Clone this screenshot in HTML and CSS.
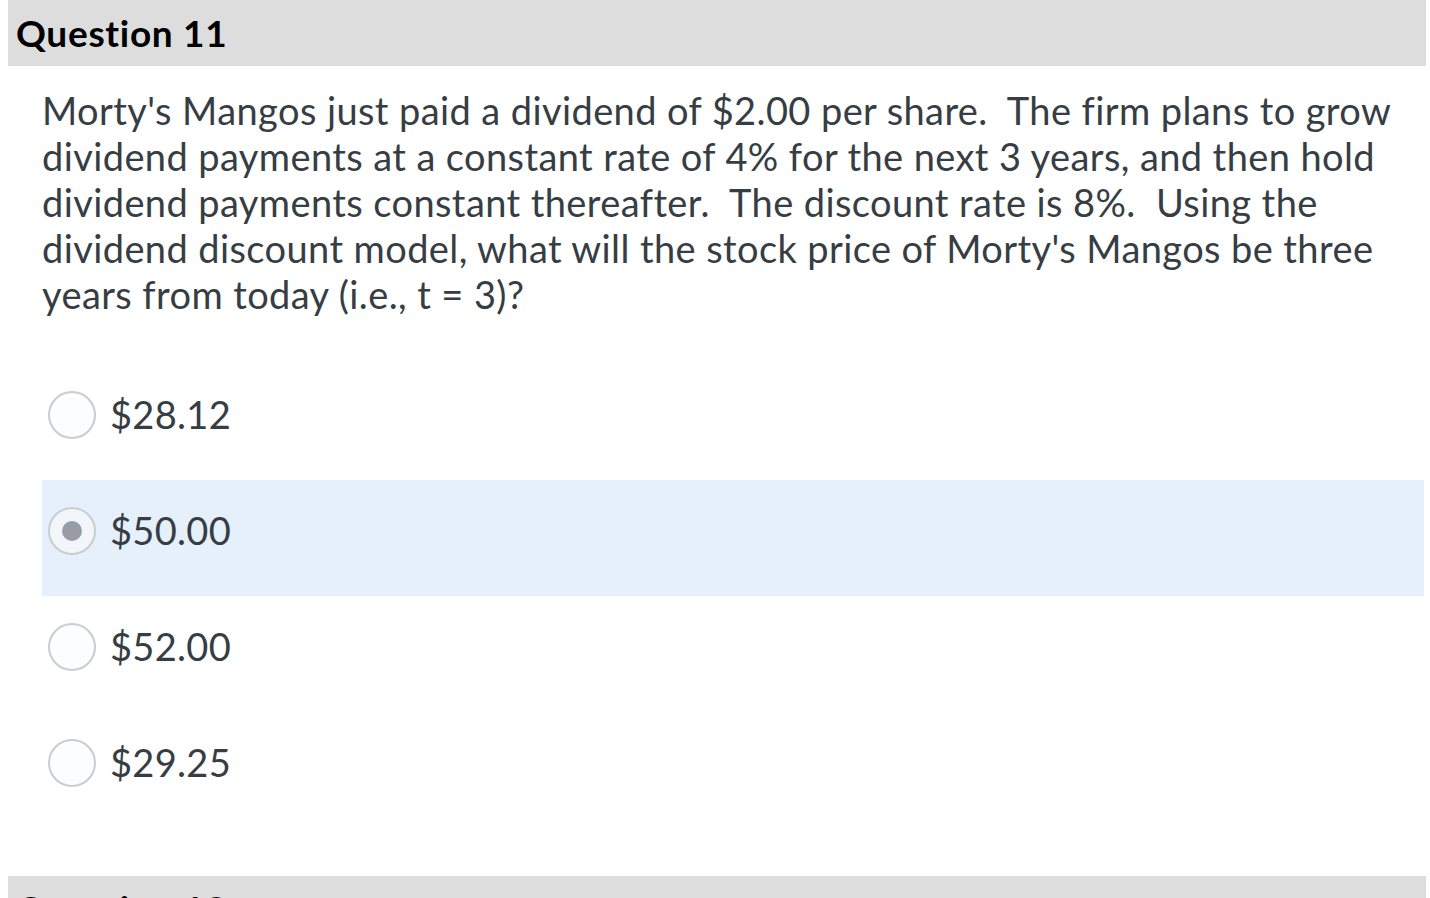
FILE: index.html
```html
<!DOCTYPE html>
<html>
<head>
<meta charset="utf-8">
<link rel="stylesheet" href="styles.css">
</head>
<body>
<div class="quiz">
  <div class="question">
    <div class="q-header">Question 11</div>
    <div class="q-text">Morty's Mangos just paid a dividend of $2.00 per share.&nbsp; The firm plans to grow dividend payments at a constant rate of 4% for the next 3 years, and then hold dividend payments constant thereafter.&nbsp; The discount rate is 8%.&nbsp; Using the dividend discount model, what will the stock price of Morty's Mangos be three years from today (i.e., t = 3)?</div>
    <div class="answers">
      <div class="answer"><span class="radio"></span><span class="label">$28.12</span></div>
      <div class="answer selected"><span class="radio checked"></span><span class="label">$50.00</span></div>
      <div class="answer"><span class="radio"></span><span class="label">$52.00</span></div>
      <div class="answer"><span class="radio"></span><span class="label">$29.25</span></div>
    </div>
  </div>
  <div class="question">
    <div class="q-header">Question 12</div>
  </div>
</div>
</body>
</html>
```
FILE: styles.css
```css
html, body {
  margin: 0;
  padding: 0;
  background: #fff;
  overflow: hidden;
}
body {
  font-family: Lato, "Liberation Sans", sans-serif;
  font-variant-ligatures: none;
  color: #363d43;
}
.quiz {
  margin-left: 8px;
  width: 1418px;
}
.q-header {
  background: #dddddd;
  height: 66px;
  box-sizing: border-box;
  padding: 10px 0 0 8px;
  font-weight: 700;
  font-size: 37px;
  line-height: 46px;
  letter-spacing: 0.7px;
  color: #000;
}
.q-text {
  padding: 21px 20px 0 34px;
  font-size: 38px;
  line-height: 46px;
  letter-spacing: 0.4px;
  color: #363d43;
}
.answers {
  padding: 47px 2px 48px 34px;
}
.answer {
  height: 116px;
  box-sizing: border-box;
  padding: 27px 0 0 6px;
  display: flex;
  align-items: flex-start;
}
.answer.selected {
  background: #e6f0fa;
}
.radio {
  flex: none;
  width: 48px;
  height: 48px;
  box-sizing: border-box;
  border: 2px solid #c7cdd1;
  border-radius: 50%;
  background: #fbfdff;
  display: flex;
  align-items: center;
  justify-content: center;
}
.radio.checked {
  background: #f2f6fb;
}
.radio.checked::after {
  content: "";
  width: 20px;
  height: 20px;
  border-radius: 50%;
  background: #979ca6;
}
.label {
  margin-left: 14px;
  font-size: 38px;
  line-height: 46px;
  letter-spacing: 0.3px;
  color: #363d43;
}
```
